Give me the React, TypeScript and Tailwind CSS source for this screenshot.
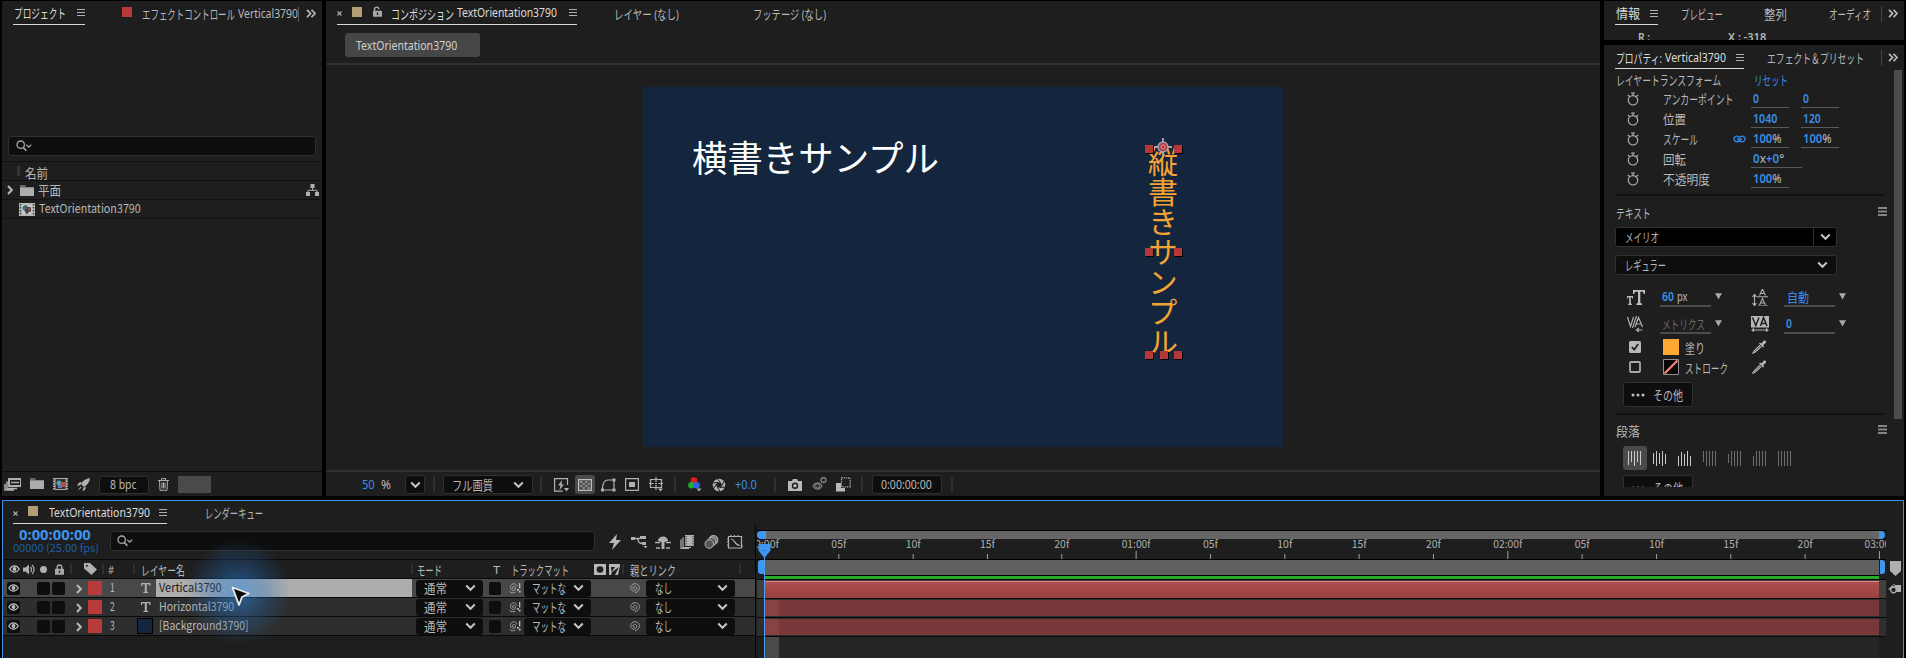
import { useLayoutEffect, useRef, type ReactNode } from "react";

/* Text squeezed or stretched horizontally to the width of its box. */
function T({ className = "", children }: { className?: string; children: ReactNode }) {
  const box = useRef<HTMLSpanElement>(null);
  const txt = useRef<HTMLSpanElement>(null);
  useLayoutEffect(() => {
    const b = box.current;
    const t = txt.current;
    if (b && t && t.offsetWidth > 0) t.style.transform = `scaleX(${b.clientWidth / t.offsetWidth})`;
  }, []);
  return (
    <span ref={box} className={`block shrink-0 whitespace-nowrap leading-none ${className}`}>
      <span ref={txt} className="inline-block origin-left">{children}</span>
    </span>
  );
}

function I({ w, h, className = "", children }: { w: number; h: number; className?: string; children: ReactNode }) {
  return (
    <svg width={w} height={h} viewBox={`0 0 ${w} ${h}`} fill="none" stroke="none" className={`block shrink-0 ${className}`}>
      {children}
    </svg>
  );
}

const Menu = ({ className = "" }: { className?: string }) => (
  <I w={8} h={9} className={className}><path d="M0 1.5h8M0 4.5h8M0 7.5h8" stroke="#b0b0b0" /></I>
);
const Burger = ({ className = "" }: { className?: string }) => (
  <I w={9} h={9} className={className}><path d="M0 1h9M0 4.5h9M0 8h9" stroke="#858585" strokeWidth="1.8" /></I>
);
const More = ({ className = "" }: { className?: string }) => (
  <I w={10} h={9} className={className}><path d="M1 .8l3.600 3.700L1 8.200M5.500 .8l3.600 3.700L5.500 8.200" stroke="#b8b8b8" strokeWidth="1.7" /></I>
);
const Down = ({ className = "" }: { className?: string }) => (
  <I w={11} h={8} className={className}><path d="M1.200 1.500l4.300 4.300l4.300-4.300" stroke="#c4c4c4" strokeWidth="2" /></I>
);
const Right = ({ className = "" }: { className?: string }) => (
  <I w={6} h={10} className={className}><path d="M1 1l3.800 4L1 9" stroke="#b8b8b8" strokeWidth="2" /></I>
);
const Close = ({ className = "" }: { className?: string }) => (
  <I w={5} h={5} className={className}><path d="M.5 .5l4 4M4.500 .5l-4 4" stroke="#b0b0b0" strokeWidth="1.100" /></I>
);
const Search = ({ className = "" }: { className?: string }) => (
  <I w={16} h={12} className={className}>
    <circle cx="4.700" cy="4.700" r="3.700" stroke="#a8a8a8" strokeWidth="1.300" />
    <path d="M7.400 7.600l3 3.200" stroke="#a8a8a8" strokeWidth="1.600" />
    <path d="M10.300 4.800l2.400 2.400l2.500-2.400" stroke="#a8a8a8" strokeWidth="1.300" />
  </I>
);
const Tri = ({ className = "" }: { className?: string }) => (
  <I w={7} h={7} className={className}><path d="M0 .3h7L3.500 6.500z" fill="#a8a8a8" /></I>
);
const Folder = ({ className = "" }: { className?: string }) => (
  <I w={14} h={11} className={className}><path d="M0 .5h5.500v1H0zM0 2.300h14V11H0z" fill="#adadad" /></I>
);
const Film = ({ className = "" }: { className?: string }) => (
  <I w={16} h={13} className={className}>
    <rect width="16" height="13" fill="#b8b8b8" />
    <path d="M1.500 1v12M14.500 1v12" stroke="#333" strokeWidth="1.300" strokeDasharray="1.500 1.500" />
    <rect x="3.500" y="2" width="9" height="9" fill="#c9c9c9" />
    <circle cx="6.400" cy="5" r="2.200" fill="#2c7f99" stroke="#222" strokeWidth=".7" />
    <path d="M8 4.500h3.500v4H9z" fill="#b5453c" stroke="#222" strokeWidth=".6" />
    <path d="M6 7.500h3v2.700H7z" fill="#335a8e" stroke="#222" strokeWidth=".6" />
  </I>
);
const Lock = ({ open = false, className = "" }: { open?: boolean; className?: string }) => (
  <I w={9} h={11} className={className}>
    <path d={open ? "M1.500 5V3.300a2.200 2.200 0 0 1 4.400 0" : "M2.200 5V3.300a2.300 2.300 0 0 1 4.600 0V5"} stroke="#a8a8a8" strokeWidth="1.400" />
    <rect y="4.800" width="9" height="6" rx=".6" fill="#a8a8a8" />
    <path d="M4.500 6.500v2.500" stroke="#1e1e1e" strokeWidth="1.300" />
  </I>
);
const Eye = ({ className = "" }: { className?: string }) => (
  <I w={11} h={8} className={className}>
    <path d="M.7 4C2.500 1.300 4 .8 5.500 .8S8.500 1.300 10.300 4C8.500 6.700 7 7.200 5.500 7.200S2.500 6.700 .7 4z" stroke="#bdbdbd" strokeWidth="1.200" />
    <circle cx="5.500" cy="4" r="1.900" fill="#bdbdbd" />
  </I>
);
const Swirl = ({ matte = false, className = "" }: { matte?: boolean; className?: string }) => (
  <I w={13} h={12} className={className}>
    <path
      d={
        matte
          ? "M5.800 6.400c-.4.900-1.600.6-1.500-.6c.2-1.700 2.700-1.900 3.200-.2c.5 2.100-1.500 3.400-3.200 2.700C2 7.300 2 4 3.700 2.600C5.600 1 8.600 2 9 4.500M1.500 9.500c1.500 1.500 4 1.700 6 .5"
          : "M6.800 6.600c-.2 1-1.800.8-1.800-.6c0-2 3-2.400 3.600-.4c.8 2.600-2 4-4 3.200C2.300 7.900 2.200 4.400 4 2.800c2.600-2.200 6.600-.8 7.200 1.900c.6 2.600-1 5.300-4.200 6"
      }
      stroke="#a0a0a0"
      strokeWidth="1"
    />
    {matte && <path d="M11 1h1.300v5.500H11zM9 7h1.800v1.800H9zM10.800 8.800h1.800v1.800h-1.800z" fill="#c0c0c0" />}
  </I>
);
const Watch = ({ className = "" }: { className?: string }) => (
  <I w={12} h={14} className={className}>
    <circle cx="6" cy="8.300" r="4.700" stroke="#b0b0b0" strokeWidth="1.200" />
    <path d="M4 1h4M6 1v2.500M1 3l1.500 1.500M11 3L9.500 4.500" stroke="#b0b0b0" strokeWidth="1.200" />
  </I>
);
const Dropper = ({ className = "" }: { className?: string }) => (
  <I w={15} h={14} className={className}>
    <path d="M8 5.200L1.800 11.300L1 13l2-.7L9.300 6.500" stroke="#b0b0b0" strokeWidth="1.200" />
    <path d="M7 3.500l1-1l1.500 1l2-2.600c1.600-1.300 3.300.5 2.200 2L11.200 5l1 1.600l-1 1z" fill="#b8b8b8" />
  </I>
);
const Sep = ({ className = "" }: { className?: string }) => <span className={`block h-[15px] w-[2px] shrink-0 bg-[#303030] ${className}`} />;

function ProjectPanel() {
  return (
    <section className="ml-[2px] mt-px flex h-[495px] w-[320px] shrink-0 flex-col bg-[#1e1e1e]">
      <div className="flex h-[25px] items-start">
        <div className="ml-[11px] flex h-[24px] w-[72px] shrink-0 items-center border-b border-[#d8d8d8] text-[#dcdcdc]">
          <T className="ml-px mt-px w-[52px] text-[13px]">プロジェクト</T>
          <Menu className="ml-[11px]" />
        </div>
        <div className="flex h-[26px] items-center">
          <span className="mb-[4px] ml-[37px] block size-[10px] bg-[#b83a3a]" />
          <T className="ml-[10px] mt-px w-[93px] text-[13px]">エフェクトコントロール</T>
          <T className="mb-px ml-[3px] w-[60px] text-[13px]">Vertical3790</T>
          <span className="h-[15px] w-px bg-[#555]" />
          <More className="mb-[2px] ml-[7px]" />
        </div>
      </div>
      <div className="ml-[6px] mt-[110px] flex h-[20px] w-[308px] items-center rounded-[3px] border border-[#303030] bg-[#0e0e0e]">
        <Search className="ml-[7px]" />
      </div>
      <div className="mt-[5px] flex h-[20px] items-center border-b border-t border-[#111]">
        <span className="ml-[15px] h-[10px] w-[3px] bg-[#333]" />
        <T className="ml-[5px] mt-[4px] w-[23px] text-[13px]">名前</T>
      </div>
      <div className="flex h-[19px] items-center border-b border-[#131313]">
        <Right className="ml-[5px]" />
        <Folder className="ml-[7px]" />
        <T className="ml-[4px] w-[23px] text-[13px]">平面</T>
        <I w={13} h={12} className="ml-[245px]">
          <path d="M4.500 0h4v4h-4zM0 8h4v4H0zM9 8h4v4H9z" fill="#b0b0b0" />
          <path d="M6.500 4v2.300M2 8V6.300h9V8" stroke="#b0b0b0" />
        </I>
      </div>
      <div className="flex h-[19px] items-center border-b border-[#131313]">
        <Film className="ml-[17px]" />
        <T className="mb-[2px] ml-[4px] w-[102px] font-['Noto_Sans_CJK_JP'] text-[12px]">TextOrientation3790</T>
      </div>
      <div className="flex-1" />
      <div className="flex h-[25px] items-center border-t border-[#0c0c0c] pt-px">
        <I w={17} h={13} className="ml-[2px]">
          <path d="M5 1h12v7H5z" stroke="#adadad" strokeWidth="2" />
          <path d="M7 4.500h8M3 3.500v7h10M1 6v6h9" stroke="#adadad" strokeWidth="1.500" />
        </I>
        <Folder className="mb-[3px] ml-[9px]" />
        <I w={15} h={12} className="mb-[2px] ml-[9px]">
          <path d="M2 .5h11v11H2z" fill="#303030" stroke="#adadad" />
          <path d="M1 0v12M14 0v12" stroke="#adadad" strokeWidth="2" strokeDasharray="1.500 1" />
          <circle cx="6" cy="5" r="2.500" fill="#4ba3b8" /><path d="M7.500 4H12v5H8z" fill="#b34940" /><path d="M5 7h4v3H5z" fill="#5b7fb8" />
        </I>
        <I w={13} h={13} className="ml-[9px]">
          <path d="M13 0C9 .5 5.500 3 4 6l3 3c3-1.500 5.500-5 6-9zM4.500 3.800L1.500 5L0 8l3.500-1zM9 9l-1 3l-2.500 1L6.500 9.500zM3.500 8.500L1 12.500l3.500-2.800z" fill="#b0b0b0" />
        </I>
        <div className="ml-[9px] flex h-[18px] w-[50px] items-center rounded-[3px] border border-[#303030] bg-[#0e0e0e]">
          <T className="ml-[10px] w-[27px] text-[12px]">8 bpc</T>
        </div>
        <I w={11} h={13} className="mb-px ml-[9px]">
          <path d="M0 2.500h11M3.500 2V.6h4V2M1.500 3l.5 9.300h7l.5-9.300M4 4.500v6M5.500 4.500v6M7 4.500v6" stroke="#b0b0b0" strokeWidth="1" />
        </I>
        <span className="ml-[9px] h-[17px] w-[33px] bg-[#4a4a4a]" />
      </div>
    </section>
  );
}

function Handle({ className }: { className: string }) {
  return <span className={`absolute size-[8px] bg-[#b43838] shadow-[1px_1px_0_#000] ${className}`} />;
}

function CompositionPanel() {
  return (
    <section className="ml-[4px] mt-px flex h-[495px] w-[1274px] shrink-0 flex-col bg-[#1e1e1e]">
      <div className="flex h-[26px] items-start">
        <div className="ml-[11px] flex h-[24px] w-[240px] shrink-0 items-center border-b border-[#d8d8d8] text-[#dcdcdc]">
          <Close className="mt-[2px]" />
          <span className="mb-[2px] ml-[10px] block size-[10px] bg-[#b19e75]" />
          <Lock open className="mb-[3px] ml-[11px]" />
          <T className="ml-[9px] mt-[3px] w-[63px] text-[13px]">コンポジション</T>
          <T className="ml-[3px] w-[100px] text-[13px]">TextOrientation3790</T>
          <Menu className="ml-[12px]" />
        </div>
        <div className="flex h-[27px] items-center">
          <T className="ml-[37px] w-[65px] text-[13px]">レイヤー (なし)</T>
          <T className="ml-[74px] w-[73px] text-[13px]">フッテージ (なし)</T>
        </div>
      </div>
      <div className="ml-[19px] mt-[6px] flex h-[24px] w-[135px] items-center rounded-[3px] bg-[#464646]">
        <T className="ml-[11px] mt-[2px] w-[101px] text-[12px] text-[#d0d0d0]">TextOrientation3790</T>
      </div>
      <div className="mt-[6px] h-[2px] bg-[#303030]" />
      <div className="flex flex-1 items-start pl-[317px] pt-[22px]">
        <div className="relative h-[360px] w-[640px] bg-[#14263d]">
          <T className="absolute left-[49px] top-[51px] w-[247px] font-['Noto_Sans_CJK_JP'] text-[36px] text-white">横書きサンプル</T>
          <div className="absolute left-[504px] top-[60px] h-[212px] w-[32px] whitespace-nowrap font-['Noto_Sans_CJK_JP'] text-[30px] leading-[32px] text-[#f5a335] [writing-mode:vertical-rl]">縦書きサンプル</div>
          <Handle className="left-[502px] top-[58px]" />
          <Handle className="left-[531px] top-[58px]" />
          <Handle className="left-[502px] top-[161px]" />
          <Handle className="left-[531px] top-[161px]" />
          <Handle className="left-[502px] top-[264px]" />
          <Handle className="left-[517px] top-[264px]" />
          <Handle className="left-[531px] top-[264px]" />
          <I w={18} h={18} className="absolute left-[511px] top-[51px]">
            <circle cx="9" cy="9" r="5" fill="#b43838" stroke="#a9a4b4" strokeWidth="1.300" />
            <circle cx="9" cy="9" r="2.200" stroke="#c9a4ac" strokeWidth="1" />
            <path d="M9 0v4.500M9 13.500V18M0 9h4.500M13.500 9H18" stroke="#a9a4b4" strokeWidth="1.800" />
          </I>
        </div>
      </div>
      <div className="flex h-[26px] items-center border-t-2 border-[#303030] pt-px">
        <T className="ml-[36px] w-[13px] text-[12px] text-[#3b8eea]">50</T>
        <T className="ml-[6px] w-[10px] text-[12px]">%</T>
        <span className="ml-[14px] flex h-[19px] w-[20px] items-center justify-center rounded-[3px] border border-[#303030] bg-[#0e0e0e]"><Down /></span>
        <Sep className="ml-[8px]" />
        <span className="ml-[8px] flex h-[19px] w-[90px] shrink-0 items-center rounded-[3px] border border-[#303030] bg-[#0e0e0e]">
          <T className="ml-[8px] mt-px w-[41px] text-[13px]">フル画質</T>
          <Down className="ml-[20px]" />
        </span>
        <Sep className="ml-[7px]" />
        <I w={15} h={14} className="ml-[12px]">
          <path d="M13.500 7V.6H.6v12.500h8" stroke="#b0b0b0" strokeWidth="1.200" />
          <path d="M8 2L4 7.500h2.500L5.500 12l4.500-5.500H7.500zM10 10h5l-2.500 3.500z" fill="#b0b0b0" />
        </I>
        <span className="ml-[6px] flex h-[19px] w-[20px] shrink-0 items-center justify-center rounded-[3px] bg-[#4a4a4a]">
          <I w={14} h={12}>
            <path d="M.6 .6h12.800v10.800H.6z" stroke="#bdbdbd" strokeWidth="1.200" />
            <path d="M2 2h2.500v2H2zM7 2h2.500v2H7zM4.500 4H7v2H4.500zM9.500 4H12v2H9.500zM2 6h2.500v2H2zM7 6h2.500v2H7zM4.500 8H7v2H4.500zM9.500 8H12v2H9.500z" fill="#8a8a8a" />
          </I>
        </span>
        <I w={15} h={14} className="ml-[6px]">
          <path d="M1.500 12V9.500C2 5 4 2 7 2h6v10H1.500" stroke="#b0b0b0" strokeWidth="1.200" />
          <path d="M0 10.500h3v3H0zM11.500 .5h3v3h-3zM11.500 10.500h3v3h-3z" fill="#b0b0b0" />
        </I>
        <I w={14} h={13} className="ml-[9px]">
          <path d="M.6 .6h12.800v11.800H.6z" stroke="#b0b0b0" strokeWidth="1.200" /><path d="M4 4h6v5H4z" fill="#b0b0b0" />
        </I>
        <I w={15} h={15} className="ml-[10px]">
          <path d="M1.500 2.500h11v8h-11zM7 0v5M7 8v5M0 6.500h4.500M9.500 6.500H14M6 6.500h2" stroke="#b0b0b0" strokeWidth="1.200" /><path d="M9 11.500h5l-2.500 3z" fill="#b0b0b0" />
        </I>
        <Sep className="ml-[10px]" />
        <I w={14} h={15} className="ml-[12px]">
          <circle cx="6" cy="3.500" r="3.300" fill="#e01c1c" /><circle cx="3.500" cy="8.300" r="3.300" fill="#1fae2c" /><circle cx="8.500" cy="8.300" r="3.300" fill="#2f62e8" /><path d="M8.500 11.500h5l-2.500 3z" fill="#b0b0b0" />
        </I>
        <I w={14} h={14} className="ml-[10px]">
          <circle cx="7" cy="7" r="4.500" stroke="#b0b0b0" strokeWidth="3.600" />
          <path d="M4.500 0L8.500 4.500M12.500 2.500L9.500 8M14 9L8 9.500M8.500 14L5.500 9.500M1 11.500L4.500 6M0 5L6 4.500" stroke="#1e1e1e" strokeWidth="1" />
        </I>
        <T className="ml-[9px] w-[22px] text-[12px] text-[#3b8eea]">+0.0</T>
        <Sep className="ml-[17px]" />
        <I w={14} h={12} className="ml-[12px]">
          <path d="M0 2h4l1-2h4l1 2h4v10H0z" fill="#b8b8b8" /><circle cx="7" cy="6.800" r="2.500" stroke="#1e1e1e" strokeWidth="1.400" />
        </I>
        <I w={15} h={14} className="mb-px ml-[10px]">
          <path d="M1 9c2-4 7-4 9 0c-2 4-7 4-9 0z" stroke="#777" strokeWidth="1.300" /><circle cx="5.500" cy="9" r="2" stroke="#777" strokeWidth="1.200" />
          <circle cx="11.500" cy="3" r="2.400" stroke="#777" strokeWidth="1.600" />
        </I>
        <I w={15} h={15} className="ml-[9px]">
          <path d="M0 6h5v5h4v3.500H0z" fill="#b8b8b8" /><path d="M5.500 .8h8.700v9H5.500z" fill="#1e1e1e" stroke="#b8b8b8" strokeWidth="1.200" strokeDasharray="1.200 1" />
        </I>
        <Sep className="ml-[10px]" />
        <span className="ml-[9px] flex h-[19px] w-[70px] shrink-0 items-center rounded-[3px] border border-[#303030] bg-[#0e0e0e]">
          <T className="ml-[8px] w-[51px] text-[12px]">0:00:00:00</T>
        </span>
        <Sep className="ml-[9px]" />
      </div>
    </section>
  );
}

function Value({ className = "", children }: { className?: string; children: ReactNode }) {
  return <div className={`h-[18px] shrink-0 border-b border-[#5a5a5a] pl-[2px] pt-[3px] font-semibold text-[#3b8eea] ${className}`}>{children}</div>;
}

function PropRow({ label, labelClass, link, children }: { label: string; labelClass: string; link?: boolean; children: ReactNode }) {
  return (
    <div className="flex h-[20px] items-center">
      <Watch className="ml-[23px]" />
      <div className="ml-[24px] flex w-[88px] shrink-0 items-center">
        <T className={`mt-px text-[13px] ${labelClass}`}>{label}</T>
        {link && (
          <I w={13} h={8} className="ml-auto mr-[5px]">
            <path d="M5 5.500H8M6.500 2.500C5 .3 1 .8 1 4s4 3.700 5.500 1.500M6.500 2.500C8 .3 12 .8 12 4S8 7.700 6.500 5.500M4 4h5" stroke="#2f7fd6" strokeWidth="1.500" />
          </I>
        )}
      </div>
      {children}
    </div>
  );
}

const ALIGN_ICONS = [
  { d: "M.5 1v14M3.500 1v11M6.500 1v15M9.500 1v11M12.500 1v14", on: true },
  { d: "M.5 3v11M3.500 1v15M6.500 3v11M9.500 1v15M12.500 4v10", on: true },
  { d: "M.5 6v10M3.500 2v14M6.500 4v12M9.500 1v15M12.500 6v10", on: true },
  { d: "M.5 1v11M3.500 1v15M6.500 1v15M9.500 1v15M12.500 1v15", on: false },
  { d: "M.5 4v9M3.500 1v15M6.500 1v15M9.500 1v15M12.500 1v15", on: false },
  { d: "M.5 6v10M3.500 1v15M6.500 1v15M9.500 1v15M12.500 1v15", on: false },
  { d: "M.5 1v15M3.500 1v15M6.500 1v15M9.500 1v15M12.500 1v15", on: false },
];

function OtherButton() {
  return (
    <div className="ml-[19px] flex h-[25px] w-[70px] shrink-0 items-center rounded-[3px] border border-[#303030] bg-[#0e0e0e]">
      <I w={14} h={4} className="ml-[7px]"><circle cx="2" cy="2" r="1.500" fill="#c0c0c0" /><circle cx="7" cy="2" r="1.500" fill="#c0c0c0" /><circle cx="12" cy="2" r="1.500" fill="#c0c0c0" /></I>
      <T className="ml-[8px] mt-px w-[30px] text-[13px]">その他</T>
    </div>
  );
}

function RightPanels() {
  return (
    <div className="ml-[4px] mt-px flex w-[300px] shrink-0 flex-col">
      <section className="h-[39px] overflow-hidden bg-[#1e1e1e]">
        <div className="flex h-[24px] items-start">
          <div className="ml-[11px] flex h-[24px] w-[43px] shrink-0 items-center border-b border-[#d8d8d8] text-[#dcdcdc]">
            <T className="ml-px mt-[2px] w-[24px] text-[13px]">情報</T>
            <Menu className="ml-[10px] mt-px" />
          </div>
          <div className="flex h-[26px] items-center">
            <T className="ml-[23px] w-[42px] text-[13px]">プレビュー</T>
            <T className="ml-[41px] w-[23px] text-[13px]">整列</T>
            <T className="ml-[42px] w-[42px] text-[13px]">オーディオ</T>
            <span className="ml-[10px] h-[16px] w-px bg-[#444]" />
            <More className="mb-[2px] ml-[6px]" />
          </div>
        </div>
        <div className="flex pt-[6px] font-semibold">
          <T className="ml-[34px] w-[12px] text-[11px]">R :</T>
          <T className="ml-[78px] w-[38px] text-[11px]">X : -318</T>
        </div>
      </section>
      <section className="mt-[5px] flex h-[451px] flex-col overflow-hidden bg-[#1e1e1e]">
        <div className="flex h-[24px] shrink-0 items-start">
          <div className="ml-[11px] flex h-[24px] w-[129px] shrink-0 items-center border-b border-[#d8d8d8] text-[#dcdcdc]">
            <T className="ml-px mt-[3px] w-[46px] text-[13px]">プロパティ:</T>
            <T className="ml-[3px] mt-[2px] w-[61px] text-[13px]">Vertical3790</T>
            <Menu className="ml-[10px] mt-[2px]" />
          </div>
          <div className="flex h-[25px] items-center">
            <T className="ml-[23px] mt-[2px] w-[97px] text-[13px]">エフェクト＆プリセット</T>
            <span className="ml-[17px] h-[16px] w-px bg-[#444]" />
            <More className="ml-[6px]" />
          </div>
        </div>
        <div className="flex">
          <div className="flex h-[419px] w-[290px] flex-col overflow-hidden">
            <div className="flex h-[20px] shrink-0 items-center">
              <T className="ml-[12px] mt-[2px] w-[105px] text-[13px]">レイヤートランスフォーム</T>
              <T className="ml-[33px] mt-[2px] w-[34px] text-[13px] text-[#3b8eea]">リセット</T>
            </div>
            <div className="flex shrink-0 flex-col">
              <PropRow label="アンカーポイント" labelClass="w-[70px]">
                <Value className="w-[38px]"><T className="w-[6px] text-[12px]">0</T></Value>
                <Value className="ml-[12px] w-[38px]"><T className="w-[6px] text-[12px]">0</T></Value>
              </PropRow>
              <PropRow label="位置" labelClass="w-[23px]">
                <Value className="w-[38px]"><T className="w-[24px] text-[12px]">1040</T></Value>
                <Value className="ml-[12px] w-[38px]"><T className="w-[18px] text-[12px]">120</T></Value>
              </PropRow>
              <PropRow label="スケール" labelClass="w-[35px]" link>
                <Value className="w-[38px]"><T className="w-[29px] text-[12px]">100<span className="font-normal text-[#c0c0c0]">%</span></T></Value>
                <Value className="ml-[12px] w-[38px]"><T className="w-[29px] text-[12px]">100<span className="font-normal text-[#c0c0c0]">%</span></T></Value>
              </PropRow>
              <PropRow label="回転" labelClass="w-[23px]">
                <Value className="w-[51px]"><T className="w-[31px] text-[12px]">0<span className="font-normal text-[#c0c0c0]">x</span>+0<span className="font-normal text-[#c0c0c0]">°</span></T></Value>
              </PropRow>
              <PropRow label="不透明度" labelClass="w-[47px]">
                <Value className="w-[38px]"><T className="w-[29px] text-[12px]">100<span className="font-normal text-[#c0c0c0]">%</span></T></Value>
              </PropRow>
            </div>
            <div className="ml-[11px] mt-[5px] h-[2px] w-[270px] shrink-0 bg-[#121212]" />
            <div className="mt-[5px] flex h-[24px] shrink-0 items-center">
              <T className="ml-[12px] w-[35px] text-[13px]">テキスト</T>
              <Burger className="mb-[3px] ml-[227px]" />
            </div>
            <div className="ml-[11px] mt-[2px] flex h-[20px] w-[222px] shrink-0 items-center rounded-[3px] border border-[#303030] bg-black">
              <T className="ml-[9px] mt-px w-[34px] text-[13px]">メイリオ</T>
              <span className="ml-[154px] h-[18px] w-px bg-[#303030]" />
              <Down className="ml-[6px]" />
            </div>
            <div className="ml-[11px] mt-[8px] flex h-[20px] w-[222px] shrink-0 items-center rounded-[3px] border border-[#303030] bg-[#0e0e0e]">
              <T className="ml-[9px] mt-px w-[41px] text-[13px]">レギュラー</T>
              <Down className="ml-[151px]" />
            </div>
            <div className="mt-[9px] flex h-[26px] shrink-0 items-center">
              <I w={18} h={15} className="ml-[23px]">
                <path d="M6 0h12v4h-1.200L16 1.700h-2.700V13l1.700.4V15H9.500v-1.600l1.500-.4V1.700H8L7.200 4H6zM0 6h6v2.500H5.200L5 7.200H3.800V13.500l1 .3V15H1.200v-1.200l1-.3V7.200H1L.8 8.500H0z" fill="#c0c0c0" />
              </I>
              <span className="ml-[15px] mt-[2px] flex h-[18px] w-[51px] items-center border-b-2 border-[#4c4c4c]">
                <T className="ml-[2px] w-[12px] text-[12px] font-semibold text-[#3b8eea]">60</T>
                <T className="ml-[3px] w-[11px] text-[12px]">px</T>
              </span>
              <Tri className="mb-[2px] ml-[4px]" />
              <I w={16} h={17} className="ml-[30px]">
                <path d="M2.500 6v10M.5 8l2-2.500l2 2.500M.5 14l2 2.500l2-2.500" stroke="#b0b0b0" strokeWidth="1.200" />
                <path d="M5 7.800h11M6 17h10M7.500 6.500L10.500 0l3 6.500M8.500 4.500h4M7.500 16l3-6.500l3 6.500M8.500 14h4" stroke="#b0b0b0" strokeWidth="1.100" />
              </I>
              <span className="ml-[16px] mt-[2px] flex h-[18px] w-[51px] items-center border-b-2 border-[#4c4c4c]">
                <T className="ml-[3px] mt-px w-[22px] text-[13px] text-[#3b8eea]">自動</T>
              </span>
              <Tri className="mb-[2px] ml-[4px]" />
            </div>
            <div className="mt-px flex h-[26px] shrink-0 items-center">
              <I w={18} h={16} className="ml-[23px]">
                <path d="M.5 1l3 9.500L6.500 1M9.500 0L5.500 12M8 11L11.500 1.500L15.500 11M9.500 8h5" stroke="#b0b0b0" strokeWidth="1.200" />
                <path d="M9.500 14h6M12 12l-2.500 2l2.500 2" stroke="#b0b0b0" strokeWidth="1.200" />
              </I>
              <span className="ml-[15px] mt-[2px] flex h-[18px] w-[51px] items-center border-b-2 border-[#4c4c4c]">
                <T className="ml-[2px] mt-px w-[43px] text-[13px] text-[#6b6b6b]">メトリクス</T>
              </span>
              <Tri className="mb-[2px] ml-[4px]" />
              <I w={18} h={16} className="ml-[29px]">
                <path d="M0 0h18v11.500H0z" fill="#b8b8b8" />
                <path d="M1.500 1.500l3.300 8L8 1.500M9.500 10l3-8.500l3.500 8.500M10.500 7.500h4.500" stroke="#1e1e1e" strokeWidth="1.500" />
                <path d="M1 14h16M3 12.300L1 14l2 1.700M15 12.300l2 1.700l-2 1.700" stroke="#b0b0b0" strokeWidth="1.100" />
              </I>
              <span className="ml-[15px] mt-[2px] flex h-[18px] w-[51px] items-center border-b-2 border-[#4c4c4c]">
                <T className="ml-[2px] w-[6px] text-[12px] font-semibold text-[#3b8eea]">0</T>
              </span>
              <Tri className="mb-[2px] ml-[4px]" />
            </div>
            <div className="flex h-[20px] shrink-0 items-center">
              <I w={12} h={12} className="ml-[25px]"><rect width="12" height="12" rx="1.500" fill="#b8b8b8" /><path d="M2.800 6l2.400 2.500l4-5.500" stroke="#1e1e1e" strokeWidth="1.800" /></I>
              <span className="ml-[22px] size-[16px] bg-[#ffa834]" />
              <T className="ml-[6px] mt-[2px] w-[20px] text-[13px]">塗り</T>
              <Dropper className="ml-[47px]" />
            </div>
            <div className="flex h-[20px] shrink-0 items-center">
              <I w={12} h={12} className="ml-[25px]"><rect x="1" y="1" width="10" height="10" rx="1" stroke="#a8a8a8" strokeWidth="1.800" /></I>
              <I w={16} h={16} className="ml-[22px]"><path d="M.5 .5h15v15H.5z" fill="#050505" stroke="#909090" /><path d="M1.500 14.500l13-13" stroke="#ee7f70" strokeWidth="2.400" /></I>
              <T className="ml-[6px] mt-[2px] w-[43px] text-[13px]">ストローク</T>
              <Dropper className="ml-[24px]" />
            </div>
            <div className="mt-[5px] flex"><OtherButton /></div>
            <div className="ml-[11px] mt-[6px] h-[2px] w-[270px] shrink-0 bg-[#121212]" />
            <div className="mt-[4px] flex h-[24px] shrink-0 items-center">
              <T className="ml-[12px] w-[24px] text-[13px]">段落</T>
              <Burger className="mb-[3px] ml-[238px]" />
            </div>
            <div className="ml-[19px] mt-[3px] flex h-[24px] shrink-0 items-center">
              {ALIGN_ICONS.map((a, i) => (
                <span key={i} className={`mr-px flex size-[24px] items-center justify-center rounded-[3px] ${i === 0 ? "bg-[#4a4a4a]" : ""}`}>
                  <I w={14} h={16}><path d={a.d} stroke={a.on ? "#c8c8c8" : "#6e6e6e"} /></I>
                </span>
              ))}
            </div>
            <div className="mt-[5px] flex h-[12px] shrink-0 items-start overflow-hidden"><OtherButton /></div>
          </div>
          <div className="mt-px h-[349px] w-[8px] bg-[#4b4b4b]" />
        </div>
      </section>
    </div>
  );
}

const LAYERS = [
  { n: "1", name: "Vertical3790", w: "w-[63px]", selected: true, solid: false },
  { n: "2", name: "Horizontal3790", w: "w-[75px]", selected: false, solid: false },
  { n: "3", name: "[Background3790]", w: "w-[90px]", selected: false, solid: true },
];

function LayerRow({ layer }: { layer: (typeof LAYERS)[number] }) {
  return (
    <div className={`flex h-[19px] items-center border-b border-[#090909] ${layer.selected ? "bg-[#484848]" : "bg-[#2e2e2e]"}`}>
      <span className="ml-[4px] flex h-[13px] w-[13px] items-center justify-center rounded-[2px] bg-[#0e0e0e]"><Eye /></span>
      <span className="ml-[17px] h-[13px] w-[13px] rounded-[2px] bg-[#0e0e0e]" />
      <span className="ml-[2px] h-[13px] w-[13px] rounded-[2px] bg-[#0e0e0e]" />
      <Right className="ml-[11px] mt-px" />
      <span className="ml-[6px] h-[14px] w-[14px] bg-[#b83a3a]" />
      <T className="mb-[3px] ml-[8px] w-[5px] font-['Noto_Sans_CJK_JP'] text-[12px]">{layer.n}</T>
      {layer.solid ? (
        <span className="ml-[22px] mr-px h-[16px] w-[16px] border border-black bg-[#14263d]" />
      ) : (
        <I w={10} h={10} className="ml-[26px] mr-[3px]"><path d="M0 0h9.500v3H8.500L8 1.200H5.800V8.800l1.400.3V10H2.400v-.9l1.400-.3V1.200H1.500L1 3H0z" fill="#adadad" /></I>
      )}
      <div className={`ml-[2px] flex h-[18px] w-[256px] shrink-0 items-center ${layer.selected ? "bg-[#adadad] text-[#1c1c1c]" : ""}`}>
        <T className={`mb-[3px] ml-[3px] font-['Noto_Sans_CJK_JP'] text-[12px] ${layer.w}`}>{layer.name}</T>
      </div>
      <span className="ml-[4px] flex h-[17px] w-[67px] shrink-0 items-center rounded-[3px] bg-[#0e0e0e]">
        <T className="ml-[8px] mt-px w-[23px] text-[13px]">通常</T><Down className="ml-[18px]" />
      </span>
      <span className="ml-[6px] h-[13px] w-[12px] shrink-0 rounded-[2px] bg-[#0e0e0e]" />
      <Swirl matte className="ml-[7px]" />
      <span className="ml-[3px] flex h-[17px] w-[67px] shrink-0 items-center rounded-[3px] bg-[#0e0e0e]">
        <T className="ml-[8px] mt-px w-[34px] text-[13px]">マットな</T><Down className="ml-[7px]" />
      </span>
      <Swirl className="ml-[37px]" />
      <span className="ml-[5px] flex h-[17px] w-[89px] shrink-0 items-center rounded-[3px] bg-[#0e0e0e]">
        <T className="ml-[9px] mt-px w-[17px] text-[13px]">なし</T><Down className="ml-[45px]" />
      </span>
    </div>
  );
}

const TICKS = ["0:00f", "05f", "10f", "15f", "20f", "01:00f", "05f", "10f", "15f", "20f", "02:00f", "05f", "10f", "15f", "20f", "03:00f"];

function TimeGraph() {
  return (
    <div className="relative ml-[1px] flex w-[1129px] shrink-0 flex-col overflow-hidden">
      <div className="mt-[5px] flex h-[9px] border-y border-black">
        <span className="h-[8px] w-[9px] rounded-l-full bg-[#3f97f0]" />
        <span className="h-[8px] w-[1113px] bg-[#666]" />
        <span className="h-[8px] w-[6px] rounded-r-full bg-[#3f97f0]" />
      </div>
      <svg width="1129" height="20" className="block shrink-0">
        {TICKS.map((t, i) => {
          const x = 7.5 + i * 74.33;
          const w = t.length > 3 ? 29 : 15;
          const off = i === 0 ? -9.5 : i === 15 ? -15 : -w / 2;
          return (
            <g key={i}>
              <text x={x + off} y="9" fontSize="11" fontFamily="'Noto Sans CJK JP', sans-serif" fill="#b0b0b0" textLength={i === 0 ? 24 : w} lengthAdjust="spacingAndGlyphs">{t}</text>
              <path d={`M${x} ${i % 5 === 0 ? 12 : 15}V20`} stroke="#a0a0a0" />
            </g>
          );
        })}
      </svg>
      <div className="flex h-[16px] items-start border-t border-black">
        <span className="ml-[1px] h-[14px] w-[6px] rounded-l-[3px] bg-[#3f97f0]" />
        <span className="h-[15px] w-[1115px] bg-[#606060]" />
        <span className="ml-px h-[14px] w-[5px] rounded-r-[3px] bg-[#3f97f0]" />
      </div>
      <div className="ml-[7px] h-[4px] w-[1115px] border-t border-black bg-[#27ad2d]" />
      <div className="h-px bg-black" />
      {LAYERS.map((l) => (
        <div key={l.n} className={`flex h-[19px] items-start border-b border-[#090909] pt-px ${l.selected ? "bg-[#404040]" : "bg-[#2e2e2e]"}`}>
          {l.selected ? (
            <span className="ml-[7px] h-[17px] w-[1115px] border-t border-[#cf8d8d] bg-linear-to-b from-[#b04e4e] to-[#994040]" />
          ) : (
            <span className="ml-[7px] h-[16px] w-[1115px] bg-linear-to-r from-[#874244] from-[15px] to-[#783739] to-[15px]" />
          )}
        </div>
      ))}
      <div className="ml-[7px] w-[1115px] flex-1 bg-[#252525]"><div className="h-full w-[15px] bg-[#4a4a4a]" /></div>
      <I w={13} h={14} className="absolute left-[1px] top-[19px]"><path d="M.5 0h12v6.500L6.500 14L.5 6.500z" fill="#3f97f0" /><path d="M5 6.500h1M7 6.500h1" stroke="#1b4f86" /></I>
      <span className="absolute bottom-0 left-[7px] top-[32px] w-px bg-[#4a9df0]" />
    </div>
  );
}

function Timeline() {
  return (
    <section className="relative ml-[2px] mt-[4px] flex h-[158px] w-[1902px] flex-col overflow-hidden border-x border-t border-[#3f8fe0] bg-[#1e1e1e]">
      <div className="flex h-[24px] shrink-0 items-start">
        <div className="ml-[10px] flex h-[23px] w-[154px] shrink-0 items-center border-b border-[#d8d8d8] text-[#dcdcdc]">
          <Close className="mt-[2px]" />
          <span className="mb-[2px] ml-[10px] size-[10px] bg-[#b19e75]" />
          <T className="ml-[11px] w-[101px] text-[13px]">TextOrientation3790</T>
          <Menu className="ml-[9px] mt-px" />
        </div>
        <T className="ml-[38px] mt-[6px] w-[58px] text-[13px]">レンダーキュー</T>
      </div>
      <div className="flex flex-1">
        <div className="flex w-[752px] shrink-0 flex-col">
          <div className="flex h-[34px] shrink-0">
            <div className="w-[107px] shrink-0">
              <T className="ml-[16px] mt-[3px] w-[72px] text-[14px] font-bold text-[#3f93ee]">0:00:00:00</T>
              <T className="ml-[10px] w-[86px] font-['Noto_Sans_CJK_JP'] text-[11px] text-[#1c5da6]">00000 (25.00 fps)</T>
            </div>
            <div className="mt-[6px] flex h-[20px] w-[485px] shrink-0 items-center rounded-[3px] border border-[#303030] bg-[#0e0e0e]"><Search className="ml-[6px]" /></div>
            <div className="flex h-[34px] items-center">
              <I w={12} h={16} className="ml-[14px]"><path d="M8 0L0 9h5L3 16l9-10H7z" fill="#b8b8b8" /></I>
              <I w={17} h={12} className="ml-[10px]"><path d="M0 1h4v3H0zM9 0h6v3H9zM11 6h4v3h-4zM12.500 10h4l-2 2.500z" fill="#b0b0b0" /><path d="M4 2.500h5M6.500 2.500c1 4 2 5 5 5" stroke="#b0b0b0" strokeWidth="1.300" /></I>
              <I w={16} h={13} className="ml-[7px]"><path d="M0 6.500h5M11 6.500h5M1 12h4M11 12h4" stroke="#b0b0b0" strokeWidth="1.500" /><path d="M3 5a5 4.500 0 0 1 10 0L9.500 6v7h-3V6z" fill="#b0b0b0" /></I>
              <I w={14} h={14} className="ml-[9px]"><path d="M5 0h9v11H5z" fill="#b0b0b0" /><path d="M3 2.500v10h8M1 4.500v9h8" stroke="#b0b0b0" strokeWidth="1.200" /><path d="M6 1v10M13 1v10" stroke="#1e1e1e" strokeDasharray="1.200 1.200" /></I>
              <I w={15} h={14} className="ml-[10px]"><circle cx="9.500" cy="5" r="4.300" fill="#777" stroke="#b0b0b0" strokeWidth="1.200" /><circle cx="7.500" cy="7" r="4.300" stroke="#b0b0b0" fill="#555" /><circle cx="5.300" cy="9" r="4.300" stroke="#b0b0b0" fill="#555" /></I>
              <I w={16} h={14} className="ml-[8px]"><path d="M1.500 1.500h13v11.500h-13zM4 4c4 0 3 6 9 6.500M4 0v2M7.500 0v2M11 0v2M0 4h2M0 7h2M0 10h2M14 11h2" stroke="#b0b0b0" strokeWidth="1.200" /></I>
            </div>
          </div>
          <div className="flex h-[20px] shrink-0 items-center border-y border-[#0a0a0a]">
            <Eye className="ml-[6px]" />
            <I w={12} h={11} className="ml-[3px]"><path d="M0 3.500h2.500L6 .5v10L2.500 7.500H0z" fill="#b0b0b0" /><path d="M7.500 3c1.300 1.500 1.300 3.500 0 5M9 1c2.700 2.500 2.700 6.500 0 9" stroke="#b0b0b0" strokeWidth="1.200" /></I>
            <span className="ml-[5px] size-[7px] rounded-full bg-[#b0b0b0]" />
            <Lock className="ml-[8px]" />
            <Sep className="ml-[6px] !h-[10px]" />
            <I w={13} h={12} className="ml-[12px]"><path d="M0 0h6l7 6.500L7.500 12L0 5.500z" fill="#b0b0b0" /><circle cx="2.800" cy="2.800" r="1" fill="#1e1e1e" /></I>
            <Sep className="ml-[5px] !h-[10px]" />
            <T className="ml-[4px] mt-px w-[6px] text-[11px]">#</T>
            <Sep className="ml-[19px] !h-[10px]" />
            <T className="ml-[6px] mt-[2px] w-[44px] text-[13px]">レイヤー名</T>
            <Sep className="ml-[226px] !h-[10px]" />
            <T className="ml-[4px] mt-[2px] w-[25px] text-[13px]">モード</T>
            <T className="ml-[51px] mt-px w-[7px] text-[11px]">T</T>
            <T className="ml-[11px] mt-[2px] w-[58px] text-[13px]">トラックマット</T>
            <I w={12} h={11} className="ml-[25px]"><path d="M0 0h12v11H0z" fill="#b8b8b8" /><circle cx="6" cy="5.500" r="3.300" fill="#1e1e1e" /></I>
            <I w={11} h={11} className="ml-[3px]"><path d="M0 0h11v2L9 11H6l4-8L3 8l-1 3H0z" fill="#b8b8b8" /><path d="M2 3h4L2.500 8z" fill="#1e1e1e" /></I>
            <Sep className="ml-[2px] !h-[10px]" />
            <T className="ml-[6px] mt-[2px] w-[46px] text-[13px]">親とリンク</T>
            <Sep className="ml-[63px] !h-[10px]" />
          </div>
          {LAYERS.map((l) => <LayerRow key={l.n} layer={l} />)}
        </div>
        <div className="flex border-l border-black"><TimeGraph /></div>
        <div className="ml-[4px] flex flex-col">
          <I w={11} h={15} className="mt-[36px]"><path d="M0 0h11v10L5.500 15L0 10z" fill="#b0b0b0" /></I>
          <I w={14} h={12} className="-ml-[3px] mt-[6px]"><path d="M7.500 1.500L.8 7.500h6.700zM6 3h8v7H9z" fill="#b0b0b0" /><circle cx="6.500" cy="8" r="2.800" stroke="#b0b0b0" fill="#1e1e1e" strokeWidth="1.300" /></I>
        </div>
      </div>
      <div className="pointer-events-none absolute left-[182px] top-[38px] h-[106px] w-[106px] bg-[radial-gradient(closest-side,rgba(45,140,230,0.55),rgba(35,110,190,0.32)_50%,rgba(30,90,160,0))]" />
      <I w={22} h={24} className="absolute left-[227px] top-[84px]"><path d="M2.500 2.500L19 8.500L12 12L9 20z" fill="#080808" stroke="#ececec" strokeWidth="1.800" strokeLinejoin="round" /></I>
    </section>
  );
}

export default function App() {
  return (
    <main className="flex h-[658px] w-[1906px] flex-col overflow-hidden bg-black font-['Noto_Sans','Noto_Sans_CJK_JP',sans-serif] text-[12px] text-[#b8b8b8]">
      <div className="flex h-[496px] shrink-0">
        <ProjectPanel />
        <CompositionPanel />
        <RightPanels />
      </div>
      <Timeline />
    </main>
  );
}
